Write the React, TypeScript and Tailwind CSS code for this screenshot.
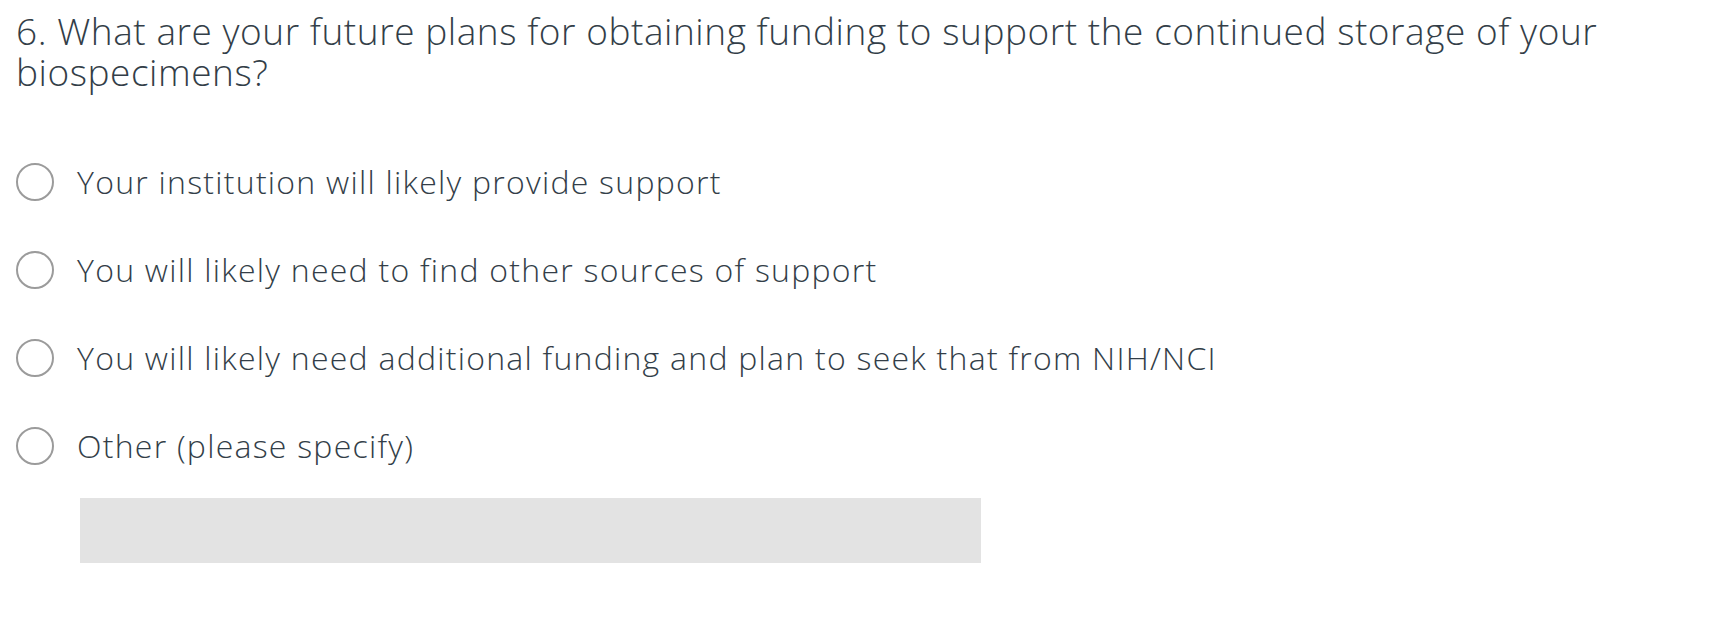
import React from "react";

const options = [
  "Your institution will likely provide support",
  "You will likely need to find other sources of support",
  "You will likely need additional funding and plan to seek that from NIH/NCI",
  "Other (please specify)",
];

export default function App() {
  return (
    <div
      className="w-[1718px] h-[630px] bg-white px-4 pt-[10px] text-[#333e48]"
      style={{ fontFamily: "'Open Sans', Roboto, sans-serif" }}
    >
      <h2 className="text-[37px] leading-[41px] font-light tracking-[0.55px]">
        6. What are your future plans for obtaining funding to support the continued storage of your
        <br />
        biospecimens?
      </h2>
      <div className="mt-[46px] flex flex-col">
        {options.map((o) => (
          <label key={o} className="h-[88px] flex items-center">
            <span className="w-[38px] h-[38px] rounded-full border-2 border-[#9b9b9b] shrink-0" />
            <span className="ml-[23px] text-[32px] font-light leading-[40px] tracking-[1.25px]">{o}</span>
          </label>
        ))}
      </div>
      <div className="ml-[64px] mt-[8px] w-[901px] h-[65px] bg-[#e3e3e3]" />
    </div>
  );
}
